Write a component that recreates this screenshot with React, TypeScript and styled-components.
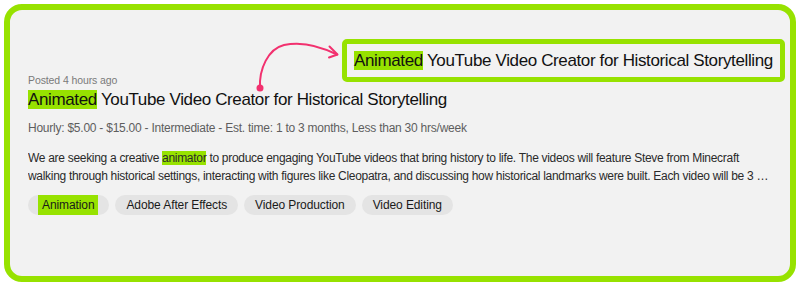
import styled, { createGlobalStyle } from "styled-components";

const GlobalStyle = createGlobalStyle`
	html, body {
		margin: 0;
		padding: 0;
		background: #ffffff;
	}
	body {
		font-family: "Liberation Sans", Arial, sans-serif;
		-webkit-font-smoothing: antialiased;
	}
`;

const job = {
	posted: "Posted 4 hours ago",
	keyword: "Animated",
	title: " YouTube Video Creator for Historical Storytelling",
	meta: "Hourly: $5.00 - $15.00 - Intermediate - Est. time: 1 to 3 months, Less than 30 hrs/week",
	descBefore: "We are seeking a creative ",
	descHit: "animator",
	descAfter: " to produce engaging YouTube videos that bring history to life. The videos will feature Steve from Minecraft walking through historical settings, interacting with figures like Cleopatra, and discussing how historical landmarks were built. Each video will be 3 to 5 minutes long and should be entertaining as well as educational.",
	tags: ["Animation", "Adobe After Effects", "Video Production", "Video Editing"],
};

export default function App() {
	return (
		<>
			<GlobalStyle />
			<Frame>
				<Card>
					<Posted>{job.posted}</Posted>
					<Title>
						<Mark>{job.keyword}</Mark>{job.title}
					</Title>
					<Meta>{job.meta}</Meta>
					<Description>
						{job.descBefore}<Mark>{job.descHit}</Mark>{job.descAfter}
					</Description>
					<TagList>
						{job.tags.map((tag, i) => (
							<Tag key={tag}>
								{i === 0 ? <TagMark>{tag}</TagMark> : tag}
							</Tag>
						))}
					</TagList>

					{/* annotation arrow pointing from the title to the callout */}
					<Arrow viewBox="0 0 100 60" width="100" height="60">
						<path
							d="M10 51 C 9 32, 18 12, 34 8 C 52 4, 72 10, 87 17.5"
							fill="none"
							stroke="#f2316f"
							strokeWidth="2"
							strokeLinecap="round"
						/>
						<path
							d="M79.5 9.5 L 87.5 17.5 L 79 20.5"
							fill="none"
							stroke="#f2316f"
							strokeWidth="2"
							strokeLinecap="round"
							strokeLinejoin="round"
						/>
						<circle cx="10" cy="51" r="3.5" fill="#f2316f" />
					</Arrow>

					<Callout>
						<span><Mark>{job.keyword}</Mark>{job.title}</span>
					</Callout>
				</Card>
			</Frame>
		</>
	);
}

const Frame = styled.div`
	width: 800px;
	height: 286px;
	padding: 4px;
	box-sizing: border-box;
`;

const Card = styled.section`
	position: relative;
	box-sizing: border-box;
	height: 278px;
	border: 6px solid #97e200;
	border-radius: 18px;
	background: #f2f2f2;
	padding: 63px 20px 0 18px;
	display: flex;
	flex-direction: column;
	color: #1a1a1a;
`;

const Posted = styled.div`
	font-size: 10.5px;
	line-height: 14px;
	color: #7a7a7a;
	letter-spacing: -0.1px;
`;

const Title = styled.h2`
	margin: 2px 0 0;
	font-size: 17px;
	font-weight: 400;
	line-height: 21px;
	color: #111;
	letter-spacing: -0.37px;
`;

const Mark = styled.span`
	background: #97e200;
`;

const Meta = styled.div`
	margin-top: 10px;
	font-size: 12px;
	line-height: 16px;
	color: #5e5e5e;
	letter-spacing: -0.24px;
`;

const Description = styled.p`
	margin: 13px 0 0;
	font-size: 12px;
	line-height: 18px;
	color: #2a2a2a;
	letter-spacing: -0.3px;
	display: -webkit-box;
	-webkit-line-clamp: 2;
	-webkit-box-orient: vertical;
	overflow: hidden;
`;

const TagList = styled.ul`
	list-style: none;
	display: flex;
	gap: 6px;
	margin: 10px 0 0;
	padding: 0;
`;

const Tag = styled.li`
	height: 20px;
	padding: 0 11px;
	border-radius: 10px;
	background: #e4e4e4;
	display: flex;
	align-items: center;
	font-size: 12px;
	color: #1a1a1a;
	letter-spacing: -0.1px;

	&:first-child {
		padding: 0 11px 0 10px;
	}
`;

const TagMark = styled.span`
	background: #97e200;
	line-height: 20px;
	padding: 0 4px;
`;

const Arrow = styled.svg`
	position: absolute;
	left: 240px;
	top: 27px;
	overflow: visible;
`;

const Callout = styled.div`
	position: absolute;
	left: 332px;
	top: 29px;
	width: 443px;
	height: 43px;
	box-sizing: border-box;
	border: 5px solid #97e200;
	border-radius: 5px;
	background: #f2f2f2;
	padding: 0 0 0 7px;
	display: flex;
	align-items: center;
	font-size: 17px;
	color: #111;
	white-space: nowrap;
	letter-spacing: -0.37px;
`;
